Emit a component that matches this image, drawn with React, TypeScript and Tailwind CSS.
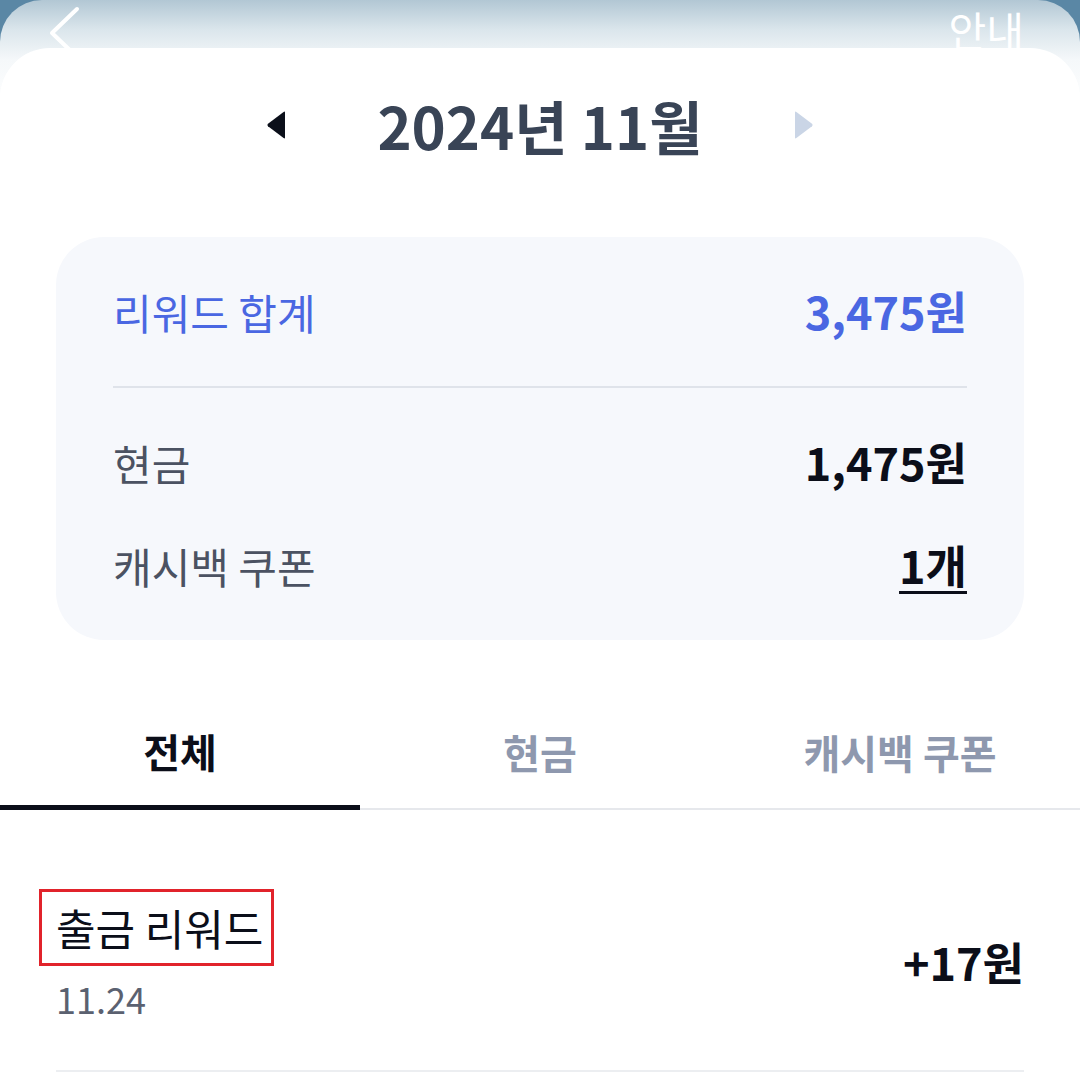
import { useState } from 'react'

// ─── Month switcher ──────────────────────────────────────────────────────────

function Triangle({ dir, color }: { dir: 'left' | 'right'; color: string }) {
  return (
    <svg width="24" height="30" viewBox="0 0 24 30" className={color}>
      {dir === 'left' ? (
        <path d="M20 2.5 L20 27.5 Q20 29 18.6 28 L3 16.2 Q1.6 15 3 13.8 L18.6 2 Q20 1 20 2.5 Z" fill="currentColor" />
      ) : (
        <path d="M4 2.5 L4 27.5 Q4 29 5.4 28 L21 16.2 Q22.4 15 21 13.8 L5.4 2 Q4 1 4 2.5 Z" fill="currentColor" />
      )}
    </svg>
  )
}

function MonthHeader() {
  return (
    <div className="flex h-[80px] items-center justify-center gap-[88px]">
      <button aria-label="이전 달">
        <Triangle dir="left" color="text-[#0b0f1a]" />
      </button>
      <h1 className="text-[58px] font-bold leading-none text-[#394456]">
        2024년 11월
      </h1>
      <button aria-label="다음 달">
        <Triangle dir="right" color="text-[#cad5e6]" />
      </button>
    </div>
  )
}

// ─── Summary card ────────────────────────────────────────────────────────────

function SummaryCard() {
  return (
    <div className="mx-[56px] mt-[72px] rounded-[48px] bg-[#f6f8fc] px-[57px] pt-[44px] pb-[45px]">
      <div className="flex h-[60px] items-center justify-between text-[#4a67e2]">
        <span className="text-[42px]">리워드 합계</span>
        <span className="text-[45px] font-bold">3,475원</span>
      </div>
      <div className="mt-[45px] h-[2px] bg-[#dfe3ea]" />
      <div className="mt-[44px] flex h-[60px] items-center justify-between">
        <span className="text-[42px] text-[#4b5262]">현금</span>
        <span className="text-[45px] font-bold text-[#0b0e19]">1,475원</span>
      </div>
      <div className="mt-[43px] flex h-[60px] items-center justify-between">
        <span className="text-[42px] text-[#4b5262]">캐시백 쿠폰</span>
        <span className="text-[45px] font-bold text-[#0b0e19] underline decoration-[3px] underline-offset-[7px]">
          1개
        </span>
      </div>
    </div>
  )
}

// ─── Tabs ────────────────────────────────────────────────────────────────────

const TABS = ['전체', '현금', '캐시백 쿠폰']

function Tabs({ active, onSelect }: { active: number; onSelect: (i: number) => void }) {
  return (
    <div className="mt-[56px] flex h-[114px] items-end">
      {TABS.map((t, i) => (
        <button key={t} onClick={() => onSelect(i)} className="flex h-full flex-1 flex-col">
          <span
            className={
              'flex flex-1 items-center justify-center text-[40px] font-bold ' +
              (active === i ? 'text-[#0b0e19]' : 'text-[#8e98ae]')
            }
          >
            {t}
          </span>
          <span className={active === i ? 'h-[5px] bg-[#0b0e19]' : 'h-[2px] bg-[#e6e8ec]'} />
        </button>
      ))}
    </div>
  )
}

// ─── Reward row ──────────────────────────────────────────────────────────────

function RewardRow() {
  return (
    <div className="mx-[56px] flex items-center justify-between border-b-2 border-[#eceef1] pt-[79px] pb-[52px]">
      <div className="flex flex-col items-start">
        <span className="-ml-[17px] flex h-[77px] items-center border-[3px] border-[#e1232b] pr-[8px] pl-[14px] text-[43px] text-[#0b0e19]">
          출금 리워드
        </span>
        <span className="mt-[12px] text-[36px] leading-[40px] text-[#5b6170]">11.24</span>
      </div>
      <span className="pt-[16px] text-[45px] font-bold text-[#0b0e19]">+17원</span>
    </div>
  )
}

// ─── Page ────────────────────────────────────────────────────────────────────

export default function App() {
  const [tab, setTab] = useState(0)

  return (
    <div className="min-h-screen w-full bg-[#5a87a5] font-['Noto_Sans_CJK_KR','Noto_Sans',sans-serif]">
      <div className="min-h-[1086px] overflow-hidden rounded-t-[42px] bg-[linear-gradient(to_bottom,#b2c7d4_0px,#dbe6ec_30px,#f5f8fa_60px,#ffffff_110px)]">
        {/* Top bar */}
        <header className="flex h-12 items-start justify-between pr-[56px] pl-[46px]">
          <svg width="36" height="58" viewBox="0 0 36 58" className="mt-[4px] shrink-0">
            <path d="M31 5 L6 29 L31 53" fill="none" stroke="white" strokeWidth="4" strokeLinecap="round" strokeLinejoin="round" />
          </svg>
          <span className="mt-[6px] text-[41px] leading-[46px] text-white">안내</span>
        </header>

        <main className="relative z-10 min-h-[1038px] rounded-t-[50px] bg-white pt-[37px]">
          <MonthHeader />
          <SummaryCard />
          <Tabs active={tab} onSelect={setTab} />
          <RewardRow />
        </main>
      </div>
    </div>
  )
}
